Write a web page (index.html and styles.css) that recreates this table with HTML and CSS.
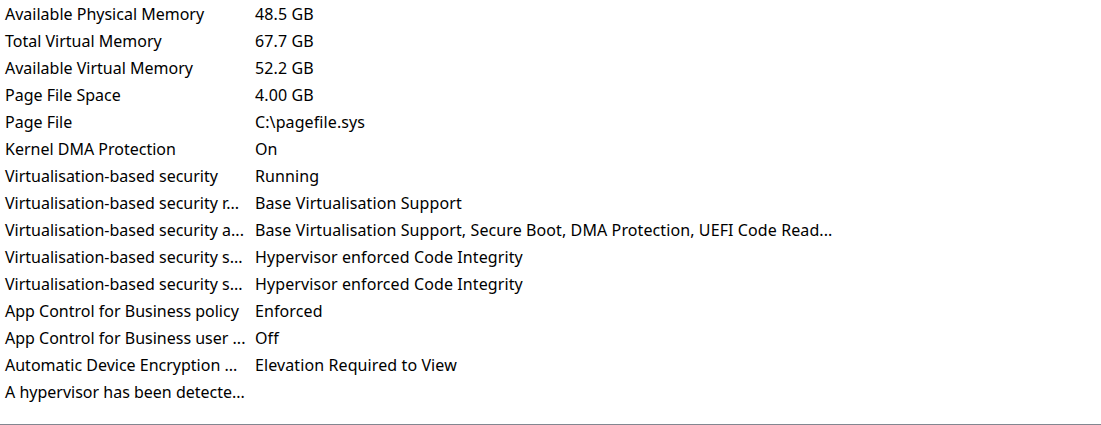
FILE: index.html
```html
<!DOCTYPE html>
<html>
<head>
<meta charset="utf-8">
<link rel="stylesheet" href="styles.css">
</head>
<body>
<div class="panel">
  <div class="list">
    <div class="row"><div class="item">Available Physical Memory</div><div class="value">48.5 GB</div></div>
    <div class="row"><div class="item">Total Virtual Memory</div><div class="value">67.7 GB</div></div>
    <div class="row"><div class="item">Available Virtual Memory</div><div class="value">52.2 GB</div></div>
    <div class="row"><div class="item">Page File Space</div><div class="value">4.00 GB</div></div>
    <div class="row"><div class="item">Page File</div><div class="value">C:\pagefile.sys</div></div>
    <div class="row"><div class="item">Kernel DMA Protection</div><div class="value">On</div></div>
    <div class="row"><div class="item">Virtualisation-based security</div><div class="value">Running</div></div>
    <div class="row"><div class="item">Virtualisation-based security r...</div><div class="value">Base Virtualisation Support</div></div>
    <div class="row"><div class="item">Virtualisation-based security a...</div><div class="value">Base Virtualisation Support, Secure Boot, DMA Protection, UEFI Code Read...</div></div>
    <div class="row"><div class="item">Virtualisation-based security s...</div><div class="value">Hypervisor enforced Code Integrity</div></div>
    <div class="row"><div class="item">Virtualisation-based security s...</div><div class="value">Hypervisor enforced Code Integrity</div></div>
    <div class="row"><div class="item">App Control for Business policy</div><div class="value">Enforced</div></div>
    <div class="row"><div class="item">App Control for Business user ...</div><div class="value">Off</div></div>
    <div class="row"><div class="item">Automatic Device Encryption ...</div><div class="value">Elevation Required to View</div></div>
    <div class="row"><div class="item">A hypervisor has been detecte...</div><div class="value"></div></div>
  </div>
</div>
</body>
</html>
```

FILE: styles.css
```css
html, body {
  margin: 0;
  padding: 0;
  background: #ffffff;
}
.panel {
  width: 1101px;
  height: 425px;
  box-sizing: border-box;
  border-bottom: 1px solid #828790;
  overflow: hidden;
  font-family: "Noto Sans", "Open Sans", sans-serif;
  font-size: 16px;
  color: #000000;
}
.list {
  display: flex;
  flex-direction: column;
}
.row {
  display: grid;
  grid-template-columns: 250px 600px;
  height: 27px;
  align-items: center;
}
.item, .value {
  white-space: nowrap;
  overflow: hidden;
  padding-left: 5px;
  line-height: 22px;
}
.value {
  letter-spacing: 0.1px;
}
```
